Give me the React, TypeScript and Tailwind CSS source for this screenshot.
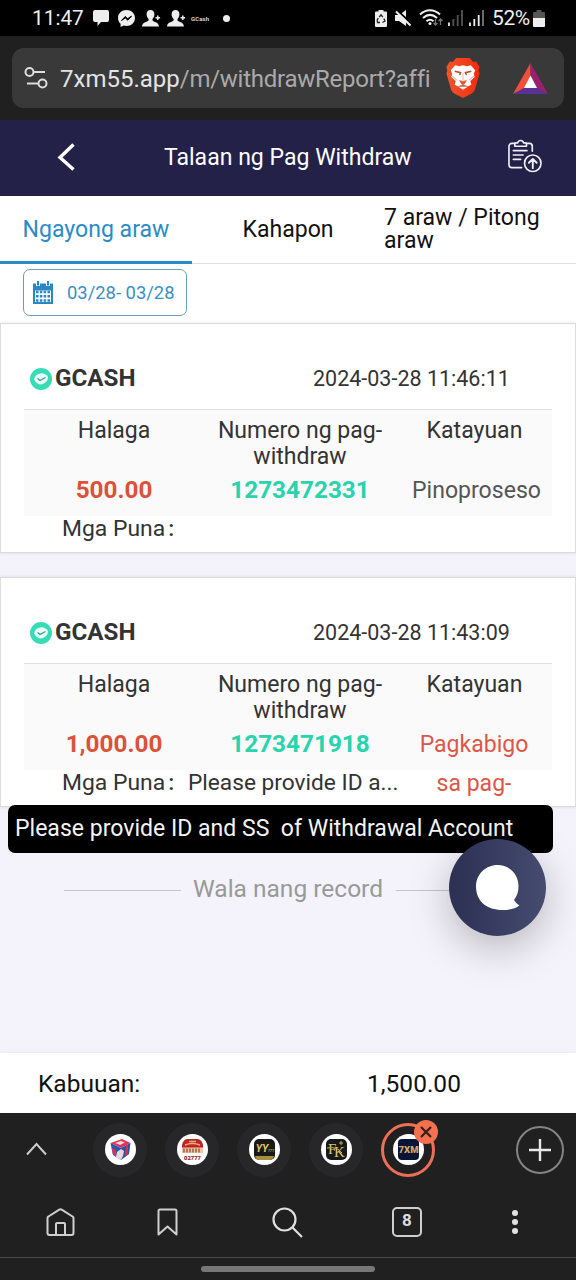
import clsx from "clsx";
import type { ReactNode } from "react";

type WithdrawRecord = {
  method: string;
  createdAt: string;
  amount: string;
  orderNo: string;
  status: string;
  failed?: boolean;
  remark?: string;
};

const records: WithdrawRecord[] = [
  {
    method: "GCASH",
    createdAt: "2024-03-28 11:46:11",
    amount: "500.00",
    orderNo: "1273472331",
    status: "Pinoproseso",
  },
  {
    method: "GCASH",
    createdAt: "2024-03-28 11:43:09",
    amount: "1,000.00",
    orderNo: "1273471918",
    status: "Pagkabigo sa pag-",
    failed: true,
    remark: "Please provide ID a...",
  },
];

function PersonAddIcon() {
  return (
    <svg className="h-[17px] w-[19px]" viewBox="0 0 19 17" fill="#eee">
      <path d="M8.500 0c2.600 0 3.900 1.800 3.900 4.300 0 2-.8 3.600-1.900 4.600v1.400c0 1.500 6.400 1.600 6.400 6.200H0c0-4.600 6.600-4.700 6.600-6.200V8.900C5.400 7.900 4.600 6.300 4.600 4.300 4.600 1.800 5.900 0 8.500 0z" />
      <path d="M15.800 5.400v4.600M13.500 7.700h4.600" stroke="#eee" strokeWidth="1.500" />
    </svg>
  );
}

function StatusBar() {
  return (
    <div className="flex h-9 shrink-0 items-center bg-black pl-8 text-[#eee]">
      <span className="w-[61px] pt-px text-[20.800px] whitespace-nowrap">11:47</span>
      <svg className="h-4 w-4" viewBox="0 0 16 16" fill="#eee">
        <path d="M2 0h12a2 2 0 0 1 2 2v8a2 2 0 0 1-2 2H8l-3.500 4V12H2a2 2 0 0 1-2-2V2a2 2 0 0 1 2-2z" />
      </svg>
      <svg className="ml-[9px] h-[17px] w-[17px]" viewBox="0 0 17 17">
        <path d="M8.500 0C3.700 0 0 3.400 0 8c0 2.400 1 4.400 2.600 5.800V17l3-1.400c.9.200 1.900.4 2.900.4 4.800 0 8.500-3.400 8.500-8s-3.700-8-8.500-8z" fill="#eee" />
        <path d="M3.500 10.500l3.700-4 2.500 2.200 3.800-2.600-3.700 4.100-2.500-2.200z" fill="#000" stroke="#000" />
      </svg>
      <span className="ml-[7px]"><PersonAddIcon /></span>
      <span className="ml-[6px]"><PersonAddIcon /></span>
      <span className="ml-[5px] w-8 text-[6px] font-medium tracking-[0.1px]">GCash</span>
      <span className="h-[7px] w-[7px] rounded-full bg-[#eee]" />

      <svg className="ml-[145px] h-[17px] w-3" viewBox="0 0 12 17">
        <path d="M3.500 0h5v1.500H11a1 1 0 0 1 1 1V16a1 1 0 0 1-1 1H1a1 1 0 0 1-1-1V2.500a1 1 0 0 1 1-1h2.500z" fill="#eee" />
        <path d="M4.200 7.200L6 4.800l1.800 2.400M8.800 8.500l1.200 2.500-2.500 1.500M5 12.500H2.500L2.200 10l1.100-1.800" stroke="#222" strokeWidth="1.300" fill="none" />
      </svg>
      <svg className="ml-[8px] h-[17px] w-[17px]" viewBox="0 0 17 17">
        <path d="M0 5h4l7-5v16l-7-5H0z" fill="#eee" />
        <path d="M2.500.500l14 13.500" stroke="#000" strokeWidth="2" />
        <path d="M1 1.500l14.500 14" stroke="#eee" strokeWidth="2" />
      </svg>
      <svg className="ml-[7px] h-[18px] w-6" viewBox="0 0 24 18" fill="none">
        <path d="M1 5.500C7-.2 15-.2 21 5.500M4 9c4.500-4 9.500-4 14 0M7.500 12.300c2.200-2 4.800-2 7 0" stroke="#eee" strokeWidth="2" />
        <circle cx="11" cy="14.500" r="1.500" fill="#eee" />
        <path d="M16.500 10v6m-2-2l2 2 2-2M21.500 16v-6m-2 2l2-2 2 2" stroke="#777" strokeWidth="1.300" />
      </svg>
      <svg className="ml-[5px] h-4 w-[15px]" viewBox="0 0 15 16">
        <path d="M1 16v-3.500" stroke="#eee" strokeWidth="1.800" />
        <path d="M5.300 16V9M9.700 16V5M14 16V0" stroke="#555" strokeWidth="1.800" />
      </svg>
      <svg className="ml-[6px] h-4 w-[15px]" viewBox="0 0 15 16">
        <path d="M1 16v-3.500M5.300 16V9M9.700 16V5" stroke="#eee" strokeWidth="1.800" />
        <path d="M14 16V0" stroke="#777" strokeWidth="1.800" />
      </svg>
      <span className="ml-[8px] w-[41px] pt-px text-[21px] tracking-[-0.4px] whitespace-nowrap">52%</span>
      <svg className="h-[17px] w-3" viewBox="0 0 12 17">
        <path d="M3.500 0h5v2H11a1 1 0 0 1 1 1v5H0V3a1 1 0 0 1 1-1h2.500z" fill="#555" />
        <path d="M0 8h12v8a1 1 0 0 1-1 1H1a1 1 0 0 1-1-1z" fill="#eee" />
      </svg>
    </div>
  );
}

function AddressBar() {
  return (
    <div className="h-[84px] shrink-0 bg-[#202020] px-3 pt-3">
      <div className="flex h-[60px] items-center rounded-[12px] bg-[#393939] pl-3">
        <svg className="h-6 w-6 shrink-0" viewBox="0 0 24 24" fill="none" stroke="#ddd" strokeWidth="2">
          <circle cx="5.500" cy="6" r="4" />
          <path d="M9.500 6H21M3 17.500h11.500" />
          <circle cx="18.500" cy="17.500" r="4" />
        </svg>
        <div className="ml-3 w-[370px] pt-[2px] text-[24px] leading-[34px] whitespace-nowrap text-[#aaa]">
          <span className="text-[#e4e4e4]">7xm55.app</span>
          <span className="tracking-[-0.260px]">/m/withdrawReport?affi</span>
        </div>
        <svg className="ml-[16px] h-[40px] w-[34px] shrink-0" viewBox="0 0 34 41">
          <defs>
            <linearGradient id="lion" x1="0" x2="1">
              <stop offset="0" stopColor="#f1562b" />
              <stop offset="1" stopColor="#f52a0c" />
            </linearGradient>
          </defs>
          <path d="M10 0h14l3.500 4 3-.5L34 9l-1 4 1 3-5 17q-1 2-3 3.500L17 41l-9-4.500Q6 35 5 33L0 16l1-3-1-4 3.500-5.500 3 .5z" fill="url(#lion)" />
          <path d="M9 7.500l4 1 4-1 4 1 4-1 4.500 5-1.500 4 1 3-4.500 4 1 4-3 1.500-5.500 3.500-5.500-3.500-3-1.500 1-4L5 19.500l1-3-1.500-4z" fill="#fff" />
          <path d="M8.500 13.500l6 1.500-1 2.500M25.500 13.500l-6 1.500 1 2.500" fill="none" stroke="#b5503c" strokeWidth="1.600" />
          <path d="M17 15v8M6 18.500l4.500 4M28 18.500l-4.500 4" fill="none" stroke="#f3c0b2" strokeWidth="1.200" />
          <path d="M13.500 23l3.500 1 3.500-1-1.500 3-2 1.200-2-1.200zM12 29.500l5-2.300 5 2.300" fill="#d9553c" stroke="#d9553c" strokeWidth=".6" />
        </svg>
        <svg className="ml-[33px] h-[31px] w-[35px] shrink-0" viewBox="0 0 35 31">
          <path d="M17.500 0L0 31l11.500-6 6-11z" fill="#f0503a" />
          <path d="M17.500 0L35 31l-11.500-6-6-11z" fill="#99206f" />
          <path d="M0 31h35l-11.500-6h-12z" fill="#5c3196" />
          <path d="M17.500 12.500L24 25H11z" fill="#fff" />
        </svg>
      </div>
    </div>
  );
}

function PageHeader() {
  return (
    <header className="flex h-[76px] shrink-0 items-center bg-[#232147] pb-[2px] text-white">
      <svg className="ml-[57px] h-7 w-[19px]" viewBox="0 0 19 28" fill="none" stroke="#fff" strokeWidth="3.400">
        <path d="M16.500 1.500L3 14.500l13.500 12" />
      </svg>
      <h1 className="ml-[88px] w-[250px] pt-[2px] text-[23.050px] leading-6 whitespace-nowrap">Talaan ng Pag Withdraw</h1>
      <svg className="mb-[2px] ml-[94px] h-[34px] w-[34px]" viewBox="0 0 35 34" fill="none" stroke="#eeeef8" strokeWidth="1.700" strokeLinejoin="round" strokeLinecap="round">
        <path d="M7 4H4a3 3 0 0 0-3 3v19a3 3 0 0 0 3 3h10M19 4h3a3 3 0 0 1 3 3v5" />
        <path d="M7 7V4.500q0-1 1-1h2q.5-2.500 3-2.500t3 2.500h2q1 0 1 1V7z" />
        <path d="M5.500 11.500h14M5.500 16h10M5.500 20.500h7.500" />
        <circle cx="25.500" cy="24.500" r="8.500" />
        <path d="M25.500 29.500v-9.500M21.500 24l4-4 4 4" strokeWidth="2" />
      </svg>
    </header>
  );
}

function Tabs() {
  return (
    <div className="grid h-[68px] shrink-0 grid-cols-3 border-b border-[#dedede] text-[23.050px] leading-[23px] text-[#111]">
      <div className="mb-[-1px] flex items-center justify-center border-b-[3px] border-[#2b8bc6] pt-[2px] text-[#2b8bc6]">
        Ngayong araw
      </div>
      <div className="flex items-center justify-center">Kahapon</div>
      <div className="flex items-center pb-[2px]">7 araw / Pitong araw</div>
    </div>
  );
}

function DateFilter() {
  return (
    <div className="h-[59px] shrink-0 pt-[5px] pl-[23px]">
      <div className="flex h-[47px] w-[164px] items-center rounded-[7px] border border-[#6f9db8] pl-2 text-[#3c8fc4]">
        <svg className="h-[23px] w-[22px]" viewBox="0 0 22 23" fill="#2b86c4">
          <path d="M1 2.500h20V23H1z" />
          <path d="M6 0v5M16 0v5" stroke="#fff" strokeWidth="4" />
          <path d="M6 0v4.500M16 0v4.500" stroke="#2b86c4" strokeWidth="2" />
          <path d="M3 9.500h16V21H3z" fill="#fff" />
          <path d="M4 11h14M4 15.200h14M4 19.400h14" stroke="#2b86c4" strokeWidth="2.500" strokeDasharray="2.500 1.330" />
        </svg>
        <span className="ml-[13px] text-[18.400px] whitespace-nowrap">03/28- 03/28</span>
      </div>
    </div>
  );
}

function RecordCard({ record }: { record: WithdrawRecord }) {
  return (
    <section className="h-[230px] shrink-0 border border-[#dcdcdf] bg-white px-[23px] shadow-[0_0_3px_rgba(0,0,0,0.12)]">
      <div className="flex h-[86px] items-center border-b border-[#dedede] pt-[24px] text-[#333]">
        <svg className="ml-[5px] h-6 w-6" viewBox="0 0 24 24">
          <circle cx="12" cy="12" r="11" fill="#37dbb6" />
          <path d="M5 12.500q1-5 6-6t8 3.500q0 5-5 7t-9-4.500z" fill="#e9fff9" />
          <path d="M8.500 11.500l2.500 2 5.500-3" fill="none" stroke="#389983" strokeWidth="1.200" />
        </svg>
        <span className="-mt-px ml-[2px] text-[24.200px] leading-7 font-bold">{record.method}</span>
        <span className="mr-[42px] ml-auto w-[197px] pt-px text-[21.500px] whitespace-nowrap">{record.createdAt}</span>
      </div>
      <div className="grid h-[106px] grid-cols-[180px_192px_156px] content-start bg-[#fafafa] pt-[8px] text-center text-[23.050px] leading-[26px] text-[#333]">
        <div className="h-[52px]">Halaga</div>
        <div className="h-[52px] px-2">Numero ng pag-withdraw</div>
        <div className="h-[52px] pl-px">Katayuan</div>
        <div className="pt-[7px] text-[24.300px] font-bold text-[#dc5138]">{record.amount}</div>
        <div className="pt-[7px] text-[24.300px] font-bold text-[#28d3ae]">{record.orderNo}</div>
        <div
          className={clsx(
            "pt-[2px] leading-[38.500px]",
            record.failed ? "px-5 text-[#dc5749]" : "pl-[5px] text-[#555]",
          )}
        >
          {record.status}
        </div>
      </div>
      <div className="flex pl-[38px] text-[22.900px] leading-[26px] text-[#333]">
        <span className="w-[126px] whitespace-nowrap">Mga Puna<span className="ml-[3px] font-medium">:</span></span>
        <span className="text-[22.700px] whitespace-nowrap">{record.remark}</span>
      </div>
    </section>
  );
}

function TabBubble({ active, children }: { active?: boolean; children: ReactNode }) {
  return (
    <div
      className={clsx(
        "relative flex h-[54px] w-[54px] items-center justify-center rounded-full",
        active ? "border-[3px] border-[#ed6f58]" : "bg-[#272729]",
      )}
    >
      <svg className="h-[31px] w-[31px]" viewBox="0 0 31 31">
        <circle cx="15.500" cy="15.500" r="15.500" fill="#fff" />
        {children}
      </svg>
      {active && (
        <div className="absolute -top-[6px] -right-[6px] flex h-6 w-6 items-center justify-center rounded-full bg-[#f4704f]">
          <svg className="h-3 w-3" viewBox="0 0 12 12" stroke="#30201d" strokeWidth="2.200">
            <path d="M1 1l10 10M11 1L1 11" />
          </svg>
        </div>
      )}
    </div>
  );
}

function TabStrip() {
  return (
    <div className="flex h-[73px] items-center">
      <svg className="mr-[46px] mb-[2px] ml-[26px] h-[14px] w-[21px]" viewBox="0 0 21 14" fill="none" stroke="#ccc" strokeWidth="2">
        <path d="M1 12.500L10.500 2 20 12.500" />
      </svg>
      <div className="flex gap-[18px]">
        <TabBubble>
          <path d="M5.500 9L17 5l8.500 4-9.500 5z" fill="#e6324c" />
          <path d="M10 9l6-2 4 1.500-5 2.500z" fill="#f5d8e4" />
          <path d="M5.500 9L16 14v12l-8-5z" fill="#2458b5" />
          <path d="M25.500 9L16 14v12l8-6z" fill="#2c4fae" />
          <path d="M6.500 14l4 1.500 1 7-3.500-2z" fill="#d53551" />
          <path d="M21 12l2-1-.5 9-2.500 2z" fill="#d53551" />
          <path d="M12 18l4-3 3 2-1 5-2 4-5-3z" fill="#e5d9d2" />
        </TabBubble>
        <TabBubble>
          <path d="M10 5h11q4 1 5 6v8H5v-8q1-5 5-6z" fill="#bd2522" />
          <path d="M8 11q7-3 15 0M12 7.500h7" stroke="#e8ad82" strokeWidth="1.500" fill="none" />
          <path d="M5 13.500h21v5.500H5z" fill="#e9c9a0" />
          <path d="M7 14.500v4M10 14.500v4M13 14.500v4M16 14.500v4M19 14.500v4M22 14.500v4" stroke="#9b4935" strokeWidth="1.300" />
          <text x="15.500" y="26" textAnchor="middle" fontSize="5.800" fontWeight="900" fill="#9b211c">02777</text>
        </TabBubble>
        <TabBubble>
          <rect x="5" y="5" width="21" height="21" rx="5" fill="#191917" />
          <path d="M6 22h19q-1 4-4 4H10q-3 0-4-4z" fill="#a88e3d" />
          <text x="13" y="18" textAnchor="middle" fontSize="10.500" fontStyle="italic" fontWeight="700" fill="#e0c66b">YY</text>
          <text x="22" y="18" textAnchor="middle" fontSize="4" fill="#e0c66b">777</text>
        </TabBubble>
        <TabBubble>
          <rect x="5" y="5" width="21" height="21" rx="5" fill="#171a1b" />
          <g fontFamily="Liberation Serif, serif" fill="#d8c774">
            <text x="7" y="20" fontSize="15">F</text>
            <text x="13" y="23" fontSize="15">K</text>
          </g>
          <path d="M6 14q10-2 15 5M20 7v4M18 9h4" stroke="#c5ac48" strokeWidth="1" fill="none" />
        </TabBubble>
        <TabBubble active>
          <rect x="5" y="5" width="21" height="21" rx="4" fill="#081536" />
          <text x="15.500" y="18.800" textAnchor="middle" fontSize="9" fontWeight="900" textLength="20" lengthAdjust="spacingAndGlyphs" fill="#d6a569">7XM</text>
        </TabBubble>
      </div>
      <div className="ml-[81px] flex h-12 w-12 items-center justify-center rounded-full border-[2.500px] border-[#858585]">
        <svg className="h-[22px] w-[22px]" viewBox="0 0 22 22" stroke="#e8e8e8" strokeWidth="2.400">
          <path d="M11 0v22M0 11h22" />
        </svg>
      </div>
    </div>
  );
}

function BrowserNav() {
  return (
    <div className="flex h-[72px] items-center border-b border-[#484848]">
      <svg className="ml-[46px] h-7 w-[29px]" viewBox="0 0 29 28" fill="none" stroke="#cfcfcf" strokeWidth="2" strokeLinejoin="round">
        <path d="M1.500 10q0-1 1-1.500L13.300 1.700q1.200-.8 2.400 0L26.500 8.500q1 .5 1 1.500v15q0 2-2 2h-22q-2 0-2-2z" />
        <path d="M10 27V16q0-1 1-1h7q1 0 1 1V27" />
      </svg>
      <svg className="ml-[82px] h-7 w-[21px]" viewBox="0 0 21 28" fill="none" stroke="#cfcfcf" strokeWidth="2" strokeLinejoin="round">
        <path d="M1.500 3q0-1.500 1.500-1.500h15q1.500 0 1.500 1.500v23.500l-9-8-9 8z" />
      </svg>
      <svg className="mt-px ml-[94px] h-[31px] w-[31px]" viewBox="0 0 31 31" fill="none" stroke="#e0e0e0" strokeWidth="2.200">
        <circle cx="12.500" cy="12.500" r="11" />
        <path d="M20.500 20.500l9.500 9.500" />
      </svg>
      <div className="ml-[89px] flex h-[30px] w-[30px] items-center justify-center rounded-[5px] border-2 border-[#cfcfcf] pb-[2px] text-[17px] font-bold text-[#ddd]">
        8
      </div>
      <div className="ml-[90px] flex flex-col gap-[3px]">
        <span className="h-[6px] w-[6px] rounded-full bg-[#e2e2e2]" />
        <span className="h-[6px] w-[6px] rounded-full bg-[#e2e2e2]" />
        <span className="h-[6px] w-[6px] rounded-full bg-[#e2e2e2]" />
      </div>
    </div>
  );
}

export default function App() {
  return (
    <div className="relative flex h-[1280px] w-[576px] flex-col overflow-hidden bg-white font-['Roboto',sans-serif]">
      <StatusBar />
      <AddressBar />
      <PageHeader />
      <Tabs />
      <DateFilter />

      <main className="flex flex-1 flex-col bg-[#f4f3fb]">
        <div className="flex flex-col gap-6">
          {records.map((record) => (
            <RecordCard key={record.orderNo} record={record} />
          ))}
        </div>
        <div className="mt-[68px] flex items-center px-16 text-[24.500px] leading-[28px] text-[#999]">
          <span className="h-px flex-1 bg-[#c4c4c8]" />
          <span className="w-[215px] pb-[2px] text-center whitespace-nowrap">Wala nang record</span>
          <span className="h-px flex-1 bg-[#c4c4c8]" />
        </div>
      </main>

      {/* Full remark */}
      <div className="absolute top-[805px] left-2 h-12 w-[545px] rounded-[7px] bg-black pl-[7px] text-[23.050px] leading-[47px] whitespace-pre text-[#f4f4f4]">
        {"Please provide ID and SS  of Withdrawal Account"}
      </div>

      {/* Support chat */}
      <div className="absolute top-[839px] left-[449px] flex h-[97px] w-[97px] items-center justify-center rounded-full bg-linear-to-r from-[#2c3053] to-[#454c70] shadow-[0_12px_40px_rgba(0,0,0,0.25)]">
        <svg className="h-[45px] w-[44px]" viewBox="0 0 44 45" fill="#fff">
          <path d="M21.500 0C33.500 0 42.500 9.500 42.500 21c0 6-1.500 10-4.500 14q1.500 3 5.500 5.500-6 4.500-17 4.500C11 45 0 36.500 0 21.500 0 9.500 9.500 0 21.500 0z" />
        </svg>
      </div>

      <div className="flex h-[60px] shrink-0 items-center bg-white pt-[2px] pl-[38px] text-[24.500px] text-[#111] shadow-[0_0_4px_rgba(0,0,0,0.06)]">
        <span className="w-[329px]">Kabuuan:</span>
        <span>1,500.00</span>
      </div>
      <footer className="h-[167px] shrink-0 bg-[#202020]">
        <TabStrip />
        <BrowserNav />
        <div className="mt-[8px] ml-[201px] h-[6px] w-[174px] rounded-full bg-[#777]" />
      </footer>
    </div>
  );
}
